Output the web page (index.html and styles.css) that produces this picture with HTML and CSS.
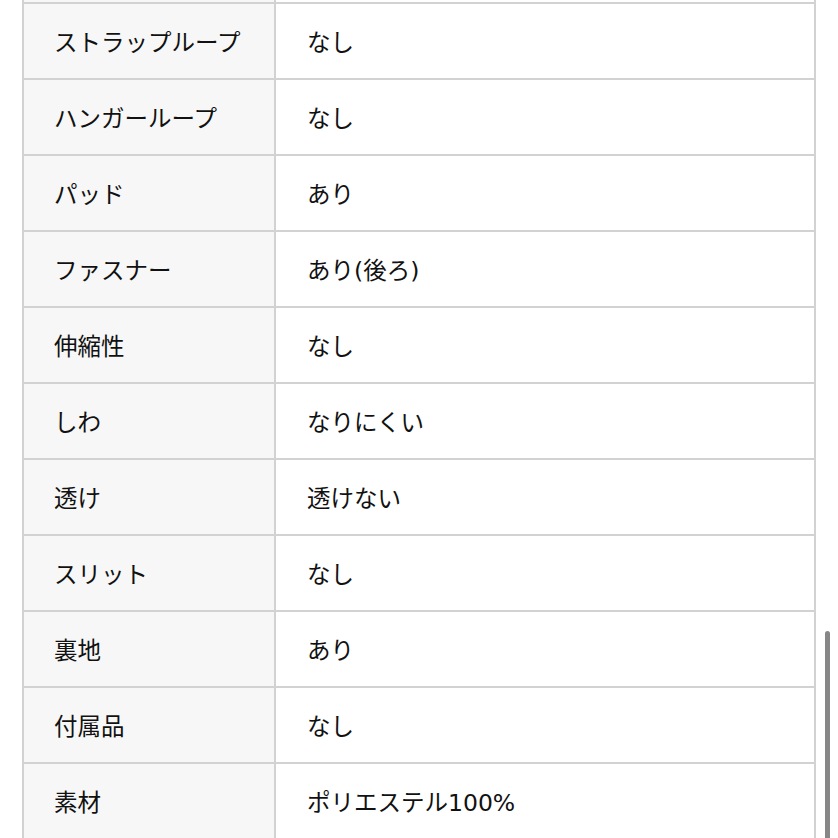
FILE: index.html
```html
<!DOCTYPE html>
<html lang="ja">
<head>
<meta charset="utf-8">
<link rel="stylesheet" href="styles.css">
</head>
<body>
<div class="spec">
  <div class="row"><div class="key"></div><div class="val"></div></div>
  <div class="row"><div class="key">ストラップループ</div><div class="val">なし</div></div>
  <div class="row"><div class="key">ハンガーループ</div><div class="val">なし</div></div>
  <div class="row"><div class="key">パッド</div><div class="val">あり</div></div>
  <div class="row"><div class="key">ファスナー</div><div class="val">あり(後ろ)</div></div>
  <div class="row"><div class="key">伸縮性</div><div class="val">なし</div></div>
  <div class="row"><div class="key">しわ</div><div class="val">なりにくい</div></div>
  <div class="row"><div class="key">透け</div><div class="val">透けない</div></div>
  <div class="row"><div class="key">スリット</div><div class="val">なし</div></div>
  <div class="row"><div class="key">裏地</div><div class="val">あり</div></div>
  <div class="row"><div class="key">付属品</div><div class="val">なし</div></div>
  <div class="row"><div class="key">素材</div><div class="val">ポリエステル100%</div></div>
</div>
<div class="scrollbar"></div>
</body>
</html>
```

FILE: styles.css
```css
html, body {
  margin: 0;
  padding: 0;
  background: #ffffff;
  overflow: hidden;
  height: 838px;
}
body {
  font-family: "DejaVu Sans", "Noto Sans CJK JP", sans-serif;
  color: #111111;
}
.spec {
  margin-top: -72px;
  margin-left: 22px;
  width: 794px;
  border-left: 2px solid #d2d2d2;
  border-right: 2px solid #d2d2d2;
  box-sizing: border-box;
}
.row {
  display: grid;
  grid-template-columns: 252px 1fr;
  height: 76px;
  border-bottom: 2px solid #d2d2d2;
  box-sizing: border-box;
}
.key {
  background: #f7f7f7;
  border-right: 2px solid #d2d2d2;
  box-sizing: border-box;
  display: flex;
  align-items: center;
  padding-left: 30px;
  font-size: 23.5px;
}
.val {
  background: #ffffff;
  display: flex;
  align-items: center;
  padding-left: 31px;
  font-size: 23.5px;
}
.scrollbar {
  position: fixed;
  left: 825px;
  top: 631px;
  width: 5px;
  height: 220px;
  border-radius: 3px;
  background: #878787;
}
```
